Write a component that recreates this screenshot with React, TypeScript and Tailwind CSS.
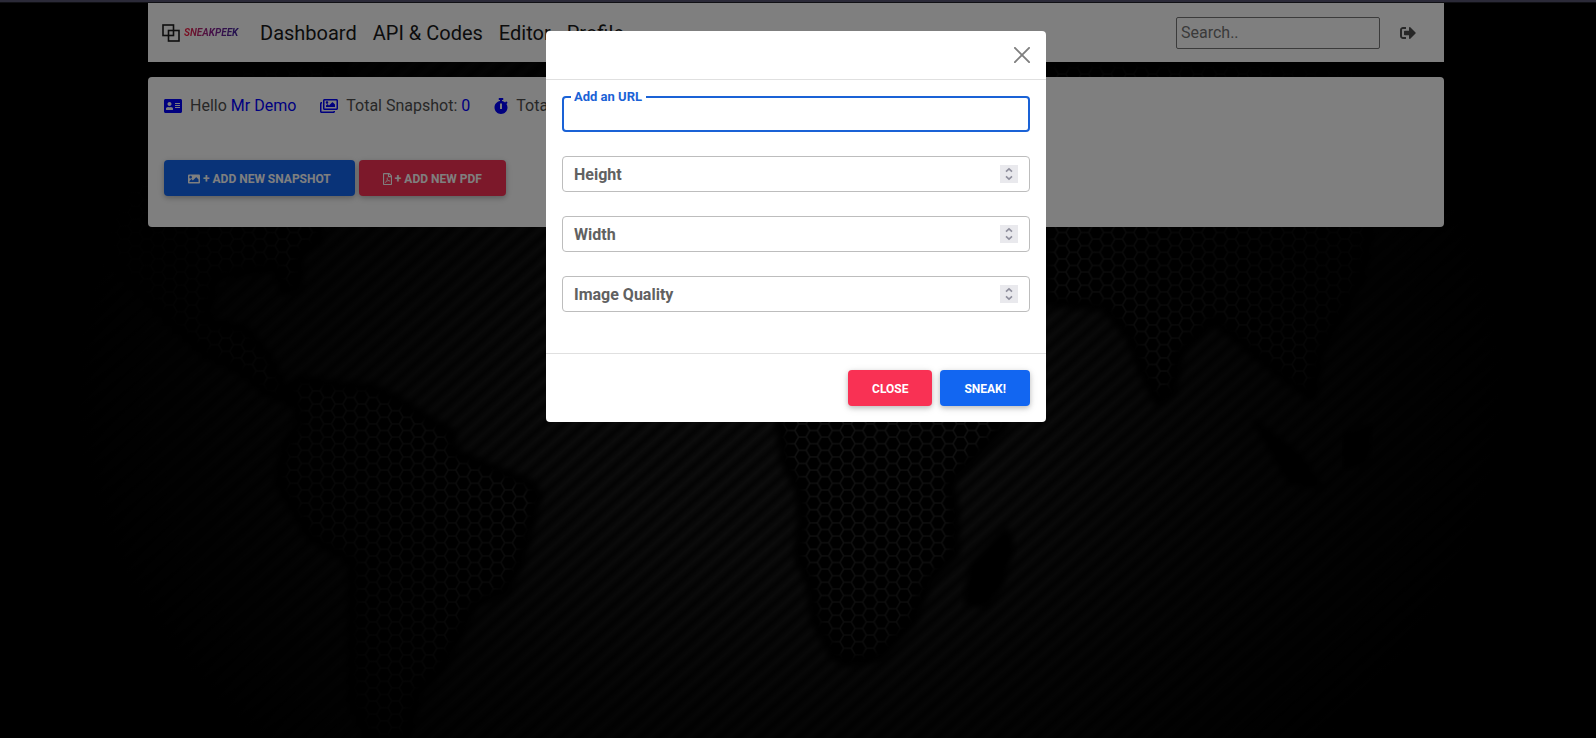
import { FaAddressCard, FaImage, FaRegFilePdf, FaRegImages, FaSignOutAlt, FaStopwatch } from "react-icons/fa";

const LAND = [
  "M290 385 L300 378 L340 384 L372 386 L400 400 L432 420 L452 432 L452 450 L500 470 L530 482 L538 494 L520 560 L505 590 L475 602 L455 640 L440 668 L418 690 L405 738 L370 738 L352 700 L352 560 L310 535 L292 505 L278 480 L285 445 L300 420 Z",
  "M100 240 L100 62 L345 62 L318 240 L300 250 L298 285 L285 290 L275 265 L215 275 L205 320 L245 328 L268 355 L290 400 L265 390 L245 372 L205 352 L170 320 L130 280 Z",
  "M780 424 L785 460 L800 490 L802 520 L798 555 L810 580 L815 620 L835 655 L850 661 L880 655 L912 620 L928 580 L955 552 L955 510 L950 480 L970 460 L1005 424 L1005 300 L780 300 Z",
  "M1046 62 L1400 62 L1360 280 L1320 350 L1312 395 L1290 380 L1258 355 L1235 335 L1213 318 L1180 350 L1172 390 L1158 400 L1143 370 L1130 335 L1105 305 L1046 300 Z",
];

const ISLANDS = [
  "M1006 528 L1012 545 L1000 585 L985 604 L966 600 L972 565 Z",
  "M1255 420 L1300 455 L1320 485 L1290 480 Z",
  "M1345 435 L1370 425 L1365 460 L1345 465 Z",
];

function Backdrop() {
  return (
    <svg aria-hidden="true" className="absolute inset-0 h-full w-full" viewBox="0 0 1596 738" preserveAspectRatio="xMidYMid slice">
      <defs>
        <linearGradient id="ridge" x1="0" y1="0" x2="0" y2="1">
          <stop offset="0" stopColor="#080808" />
          <stop offset="0.5" stopColor="#1a1a1a" />
          <stop offset="1" stopColor="#080808" />
        </linearGradient>
        <pattern id="stripes" width="14" height="13" patternUnits="userSpaceOnUse" patternTransform="rotate(-41)">
          <rect width="14" height="13" fill="url(#ridge)" />
        </pattern>
        <pattern id="cells" width="22.6" height="13.2" patternUnits="userSpaceOnUse">
          <path d="M0 6.6H3.8L7.5 0H15.1L18.8 6.6H22.6M3.8 6.6L7.5 13.2H15.1L18.8 6.6" fill="none" stroke="#242424" strokeWidth="1.5" />
        </pattern>
        <filter id="soft">
          <feGaussianBlur stdDeviation="3" />
        </filter>
        <radialGradient id="fade" gradientUnits="userSpaceOnUse" cx="0" cy="0" r="1" gradientTransform="translate(790 390) scale(740 540)">
          <stop offset="0" stopColor="#000" stopOpacity="0" />
          <stop offset="0.3" stopColor="#000" stopOpacity="0.1" />
          <stop offset="0.65" stopColor="#000" stopOpacity="0.6" />
          <stop offset="1" stopColor="#000" stopOpacity="1" />
        </radialGradient>
      </defs>
      <rect width="1596" height="738" fill="url(#stripes)" />
      {LAND.map((d) => (
        <g key={d}>
          <path d={d} fill="#000" />
          <path d={d} fill="url(#cells)" />
          <path d={d} fill="none" stroke="#000" strokeWidth="10" strokeLinejoin="round" filter="url(#soft)" />
        </g>
      ))}
      {ISLANDS.map((d) => (
        <path key={d} d={d} fill="#000" stroke="#000" strokeWidth="6" strokeLinejoin="round" filter="url(#soft)" />
      ))}
      <rect width="1596" height="738" fill="url(#fade)" />
    </svg>
  );
}

function Logo() {
  return (
    <a href="#" className="mr-5 flex items-center gap-1">
      <svg aria-hidden="true" width="18" height="18" viewBox="0 0 18 18" fill="none" stroke="#1c1c1c" strokeWidth="1.6">
        <rect x="1" y="1" width="10.5" height="10.5" />
        <rect x="6.5" y="6.5" width="10.5" height="10.5" />
      </svg>
      <span className="w-14 bg-linear-to-r from-[#ff1030] via-[#8a1c90] to-[#3a20a0] bg-clip-text text-[10px] leading-4 font-bold italic text-transparent">
        SNEAKPEEK
      </span>
    </a>
  );
}

function NumberField({ id, label }: { id: string; label: string }) {
  return (
    <div className="relative h-9">
      <input
        id={id}
        type="number"
        placeholder=" "
        className="h-9 w-full appearance-none rounded border border-[#bdbdbd] bg-transparent px-3 text-base outline-none [&::-webkit-inner-spin-button]:appearance-none"
      />
      <label htmlFor={id} className="absolute top-[7px] left-3 leading-6 font-bold text-[#616161]">
        {label}
      </label>
      <svg aria-hidden="true" className="absolute top-[9px] right-3 h-[18px] w-[18px] bg-[#e9e9ed]" viewBox="0 0 18 18" fill="none" stroke="#8f8f9d" strokeWidth="1.6">
        <path d="M6 6.7L9 3.8L12 6.7M6 11.3L9 14.2L12 11.3" />
      </svg>
    </div>
  );
}

const button =
  "flex h-9 items-center rounded px-6 pt-0.5 text-xs leading-[18px] font-bold uppercase text-white shadow-[0_2px_5px_rgba(0,0,0,0.2),0_2px_10px_rgba(0,0,0,0.1)]";

function Dialog() {
  return (
    <div className="absolute inset-0 flex items-start justify-center bg-black/50 pt-7 pr-1">
      <div role="dialog" aria-modal="true" aria-label="Add new snapshot" className="w-full max-w-[500px] rounded bg-white">
        <header className="flex h-[49px] items-center justify-end border-b border-[#e0e0e0] px-4">
          <button type="button" aria-label="Close dialog">
            <svg aria-hidden="true" width="16" height="16" viewBox="0 0 16 16" stroke="#7f7f7f" strokeWidth="1.9" strokeLinecap="round">
              <path d="M0.9 0.9L15.1 15.1M15.1 0.9L0.9 15.1" />
            </svg>
          </button>
        </header>
        <form className="flex flex-col gap-6 px-4 pt-4 pb-[41px]">
          <div className="relative h-9">
            <input id="url" type="text" className="h-9 w-full rounded border-2 border-[#1a62d6] bg-transparent px-3 text-base outline-none" />
            <label htmlFor="url" className="absolute -top-2 left-[9px] bg-white pr-1 pl-[3px] text-[13px] leading-[18px] font-bold text-[#1a62d6]">
              Add an URL
            </label>
          </div>
          <NumberField id="height" label="Height" />
          <NumberField id="width" label="Width" />
          <NumberField id="quality" label="Image Quality" />
        </form>
        <footer className="flex justify-end gap-2 border-t border-[#e0e0e0] p-4">
          <button type="button" className={button + " bg-[#f93154]"}>Close</button>
          <button type="button" className={button + " bg-[#1266f1]"}>Sneak!</button>
        </footer>
      </div>
    </div>
  );
}

export default function App() {
  return (
    <div className="flex min-h-screen flex-col bg-black font-[Roboto,sans-serif] text-base text-[#4f4f4f]">
      <div className="h-[3px] border-b border-[#101014] bg-[#2b2a38]" />
      <div className="relative flex-1 overflow-hidden pr-1">
        <Backdrop />
        <div className="relative mx-auto flex max-w-[1296px] flex-col gap-[15px]">
          <nav className="flex h-[59px] items-center bg-white pr-7 pl-3.5">
            <Logo />
            <div className="flex flex-1 gap-4 text-xl text-[#191919]">
              <a href="#">Dashboard</a>
              <a href="#">API &amp; Codes</a>
              <a href="#">Editor</a>
              <a href="#">Profile</a>
            </div>
            <input
              type="search"
              aria-label="Search"
              placeholder="Search.."
              className="mr-5 h-8 w-[204px] rounded-[2px] border border-[#767676] px-1 text-base placeholder:text-[#757575]"
            />
            <button type="button" aria-label="Sign out">
              <FaSignOutAlt className="h-4 w-4" />
            </button>
          </nav>
          <main className="rounded bg-white px-4 pt-[17px] pb-[31px]">
            <div className="mb-[42px] flex h-6 items-center gap-6">
              <span className="flex items-center gap-2">
                <FaAddressCard className="h-4 w-[18px] text-[#0000ff]" />
                <span>Hello <span className="text-[#0000ff]">Mr Demo</span></span>
              </span>
              <span className="flex items-center gap-2">
                <FaRegImages className="h-4 w-[18px] text-[#0000ff]" />
                <span>Total Snapshot: <span className="text-[#0000ff]">0</span></span>
              </span>
              <span className="flex items-center gap-2">
                <FaStopwatch className="h-4 w-[14px] text-[#0000ff]" />
                <span>Total</span>
              </span>
            </div>
            <div className="flex gap-1">
              <button type="button" className={button + " gap-[3px] bg-[#1266f1]"}>
                <FaImage className="h-3 w-3" />
                + Add new snapshot
              </button>
              <button type="button" className={button + " gap-[3px] bg-[#f93154]"}>
                <FaRegFilePdf className="h-3 w-[9px]" />
                + Add new PDF
              </button>
            </div>
          </main>
        </div>
        <Dialog />
      </div>
    </div>
  );
}
